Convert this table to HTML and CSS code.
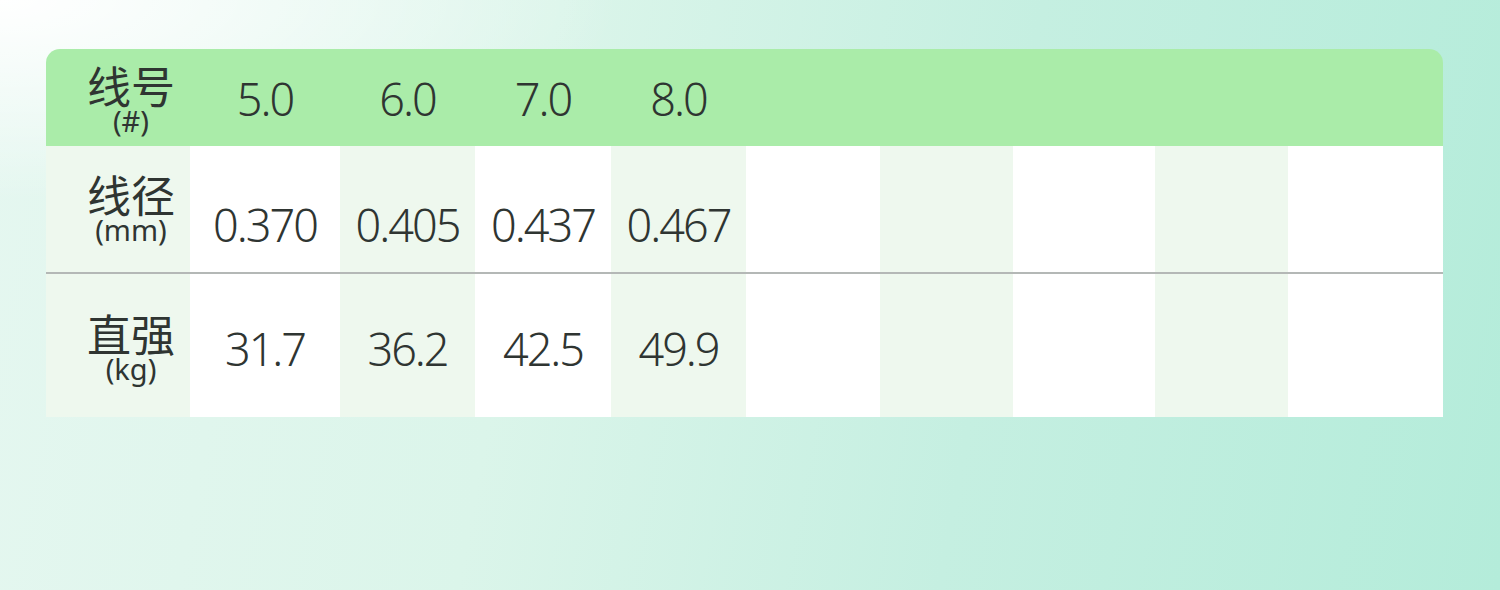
FILE: index.html
```html
<!DOCTYPE html>
<html lang="zh">
<head>
<meta charset="utf-8">
<title>线号规格表</title>
<link rel="stylesheet" href="styles.css">
</head>
<body>
<div class="page">
  <div class="spec">
    <div class="row head">
      <div class="cell label"><span class="zh">线号</span><span class="unit">(#)</span></div>
      <div class="cell">5.0</div>
      <div class="cell">6.0</div>
      <div class="cell">7.0</div>
      <div class="cell">8.0</div>
      <div class="cell"></div>
      <div class="cell"></div>
      <div class="cell"></div>
      <div class="cell"></div>
      <div class="cell"></div>
    </div>
    <div class="row r1">
      <div class="cell label alt"><span class="zh">线径</span><span class="unit">(mm)</span></div>
      <div class="cell val">0.370</div>
      <div class="cell val alt">0.405</div>
      <div class="cell val">0.437</div>
      <div class="cell val alt">0.467</div>
      <div class="cell"></div>
      <div class="cell alt"></div>
      <div class="cell"></div>
      <div class="cell alt"></div>
      <div class="cell"></div>
    </div>
    <div class="row r2">
      <div class="cell label alt"><span class="zh">直强</span><span class="unit">(kg)</span></div>
      <div class="cell val">31.7</div>
      <div class="cell val alt">36.2</div>
      <div class="cell val">42.5</div>
      <div class="cell val alt">49.9</div>
      <div class="cell"></div>
      <div class="cell alt"></div>
      <div class="cell"></div>
      <div class="cell alt"></div>
      <div class="cell"></div>
    </div>
  </div>
</div>
</body>
</html>
```

FILE: styles.css
```css
html, body {
  margin: 0;
  padding: 0;
}
body {
  width: 1500px;
  height: 590px;
  overflow: hidden;
  background:
    radial-gradient(ellipse 620px 200px at 0 0, rgba(255,255,255,1), rgba(255,255,255,0) 100%),
    linear-gradient(100deg, #e5f7f0 0%, #dbf5ea 35%, #c5efe1 65%, #b4ecda 100%);
  font-family: "Noto Sans", "Noto Sans CJK SC", sans-serif;
  font-weight: 350;
  color: #2f3532;
}
.page {
  padding: 49px 0 0 46px;
}
.spec {
  width: 1397px;
}
.row {
  display: grid;
  grid-template-columns: 144px 150px 135px 136px 135px 134px 133px 142px 133px 155px;
}
.head {
  height: 97px;
  background: #aaeca9;
  border-radius: 14px 14px 0 0;
}
.r1 {
  height: 126px;
  background: #ffffff;
  border-bottom: 2px solid #b4b8b6;
}
.r2 {
  height: 143px;
  background: #ffffff;
}
.cell {
  display: flex;
  align-items: center;
  justify-content: center;
  font-size: 45px;
  letter-spacing: -2px;
  line-height: 1;
}
.alt {
  background: #eef8ee;
}
.label {
  flex-direction: column;
  letter-spacing: 0;
  padding-left: 26px;
}
.zh {
  font-family: "Noto Sans CJK SC", sans-serif;
  font-weight: 400;
  font-size: 44px;
  line-height: 42px;
}
.unit {
  font-size: 29px;
  line-height: 30px;
  font-weight: 400;
}
.head .cell {
  padding-top: 2px;
}
.head .label {
  padding-top: 4px;
}
.r1 .val {
  padding-top: 30px;
}
.r1 .label {
  padding-top: 0;
}
.r2 .val {
  padding-top: 6px;
}
.r2 .label {
  padding-top: 4px;
}
```
